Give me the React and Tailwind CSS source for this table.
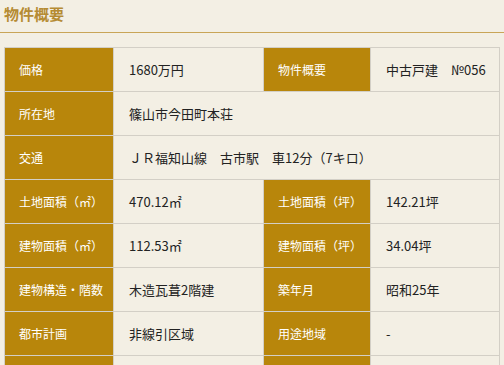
import React from "react";

const rows = [
  [["価格", "1680万円"], ["物件概要", "中古戸建　№056"]],
  [["所在地", "篠山市今田町本荘"]],
  [["交通", "ＪＲ福知山線　古市駅　車12分（7キロ）"]],
  [["土地面積（㎡）", "470.12㎡"], ["土地面積（坪）", "142.21坪"]],
  [["建物面積（㎡）", "112.53㎡"], ["建物面積（坪）", "34.04坪"]],
  [["建物構造・階数", "木造瓦葺2階建"], ["築年月", "昭和25年"]],
  [["都市計画", "非線引区域"], ["用途地域", "-"]],
  [["", ""], ["", ""]],
];

const labelCls =
  "h-[44px] border border-[#d3cfc6] bg-[#b8860b] pl-[14px] text-left align-middle text-[12px] font-normal text-white";
const valueCls =
  "h-[44px] border border-[#d3cfc6] pl-[15px] text-left align-middle text-[13px] text-[#222]";

export default function App() {
  return (
    <div
      className="h-[365px] w-[504px] overflow-hidden bg-[#f3efe4]"
      style={{ fontFamily: '"Noto Sans CJK JP", "Noto Sans", sans-serif' }}
    >
      <div className="border-b border-[#c9a557] px-1 pb-[7px] pt-[3px]">
        <h2 className="text-[15px] font-bold leading-[22px] text-[#b58b33]">物件概要</h2>
      </div>
      <div className="px-1 pt-[14px]">
        <table className="w-[495px] table-fixed border-collapse">
          <colgroup>
            <col className="w-[109px]" />
            <col className="w-[150px]" />
            <col className="w-[107px]" />
            <col className="w-[129px]" />
          </colgroup>
          <tbody>
            {rows.map((row, i) => (
              <tr key={i}>
                {row.length === 1 ? (
                  <>
                    <th className={labelCls}>{row[0][0]}</th>
                    <td className={valueCls} colSpan={3}>
                      {row[0][1]}
                    </td>
                  </>
                ) : (
                  row.map(([label, value], j) => (
                    <React.Fragment key={j}>
                      <th className={labelCls}>{label}</th>
                      <td className={valueCls}>{value}</td>
                    </React.Fragment>
                  ))
                )}
              </tr>
            ))}
          </tbody>
        </table>
      </div>
    </div>
  );
}
